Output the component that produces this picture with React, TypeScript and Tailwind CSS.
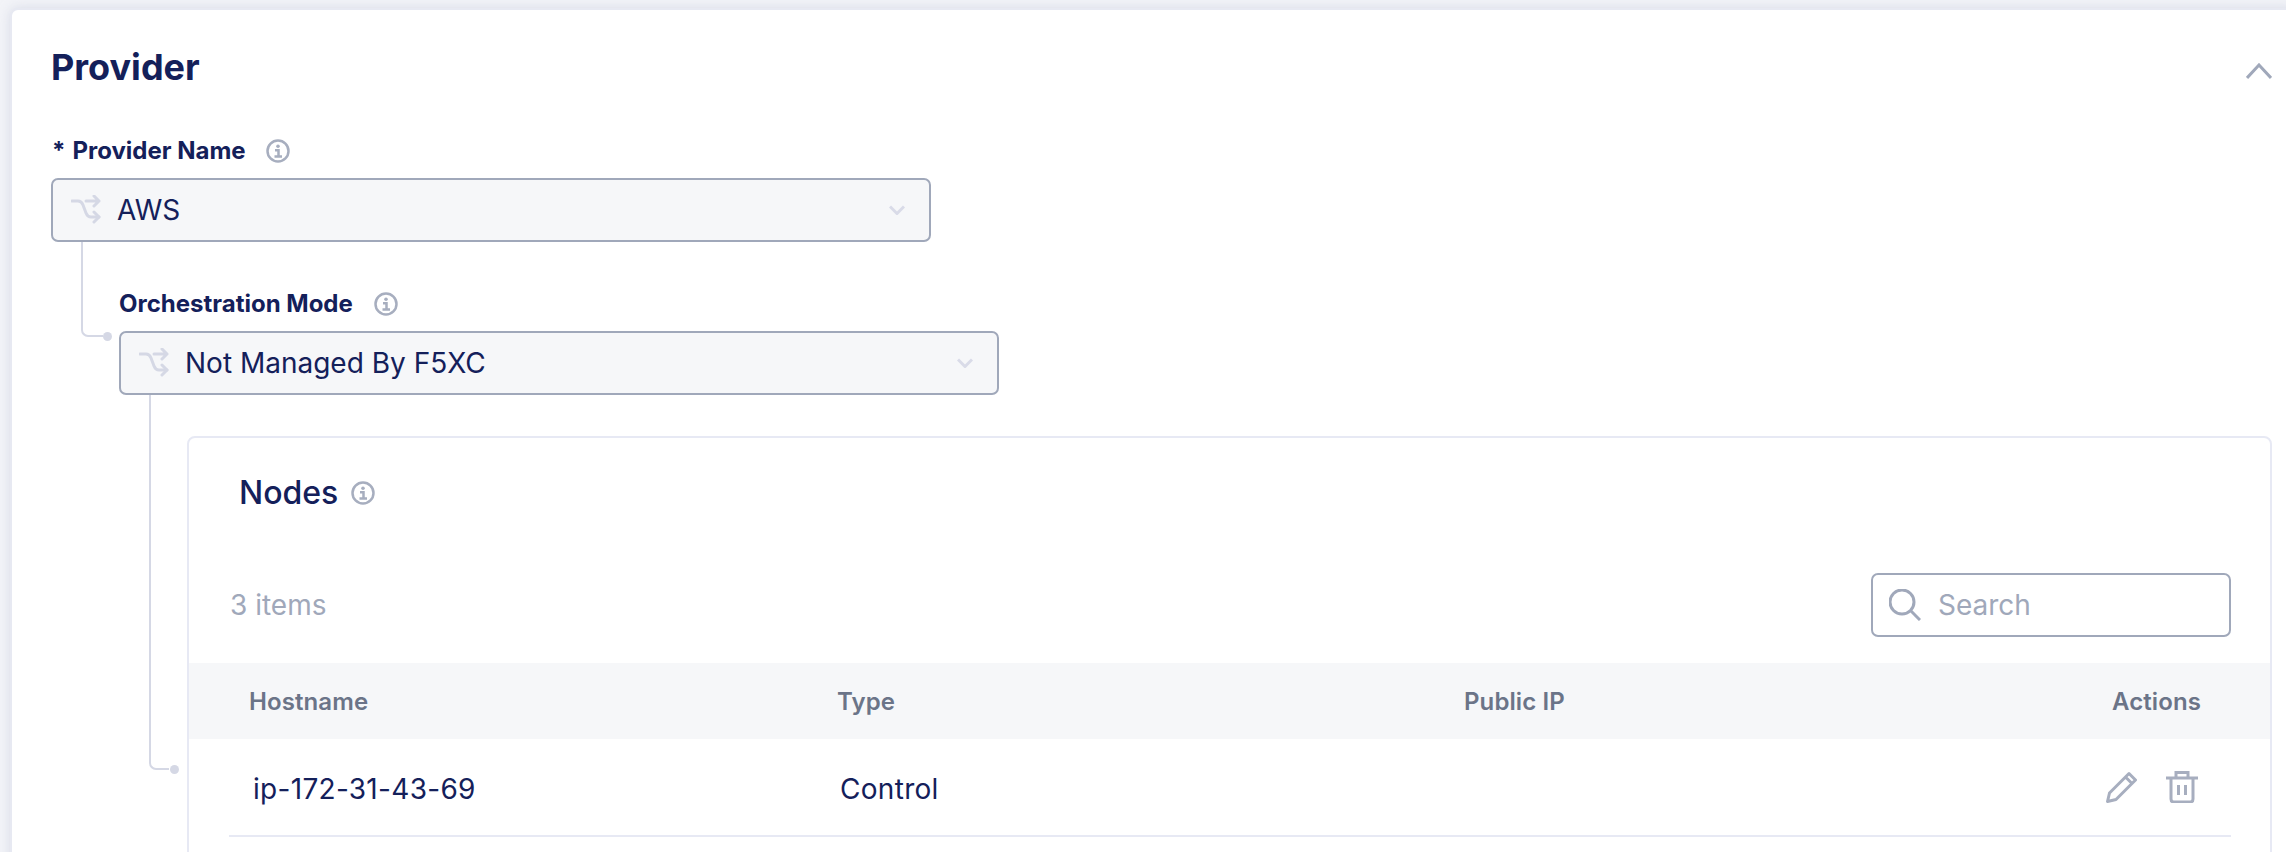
function InfoIcon() {
  return (
    <svg width="24" height="24" viewBox="0 0 24 24" fill="none" className="shrink-0">
      <circle cx="12" cy="12" r="10.5" stroke="#a7aebf" strokeWidth="2.500" />
      <circle cx="12" cy="7.200" r="1.800" fill="#a7aebf" />
      <path d="M9 11.200h3.500v6M8.500 17.500h7.500" stroke="#a7aebf" strokeWidth="2.500" />
    </svg>
  );
}

function RouteIcon() {
  return (
    <svg width="30" height="30" viewBox="0 0 30 30" fill="none" className="shrink-0">
      <path
        d="M1 6h6c3 0 4 1.500 5 4l3 8c1 2.500 2 4 5 4h8"
        stroke="#d5d8e5"
        strokeWidth="3"
        strokeLinecap="round"
      />
      <path
        d="M15 6h13M23 1l5 5-5 5M23 17l5 5-5 5"
        stroke="#d5d8e5"
        strokeWidth="3"
        strokeLinecap="round"
        strokeLinejoin="round"
      />
    </svg>
  );
}

function ChevronDown() {
  return (
    <svg width="16" height="10" viewBox="0 0 16 10" fill="none">
      <path d="M1 1.500l7 7 7-7" stroke="#d9dbe8" strokeWidth="3" />
    </svg>
  );
}

function SelectBox({ value }: { value: string }) {
  return (
    <div className="flex h-[64px] w-[880px] items-center rounded-[7px] border-2 border-[#a0a8ba] bg-[#f6f7f9] pl-[18px] pr-[24px]">
      <RouteIcon />
      <span className="ml-[16px] flex-1 text-[28px] leading-none text-[#14205a]">{value}</span>
      <ChevronDown />
    </div>
  );
}

function PencilIcon() {
  return (
    <svg width="32" height="32" viewBox="0 0 32 32" fill="none">
      <path
        d="M1.500 30.500l2-8.500L23 2.500l6.500 6.500L10 28.500l-8.500 2zM19.500 6l6.500 6.500"
        stroke="#a7aebf"
        strokeWidth="3"
        strokeLinejoin="round"
      />
    </svg>
  );
}

function TrashIcon() {
  return (
    <svg width="32" height="32" viewBox="0 0 32 32" fill="none">
      <path
        d="M0 7h32M10 7V1.500h12V7M5 7v21c0 1.700 1 3 3 3h16c2 0 3-1.300 3-3V7M12.500 14v10M19.500 14v10"
        stroke="#a7aebf"
        strokeWidth="3"
      />
    </svg>
  );
}

export default function App() {
  return (
    <div className="h-[852px] w-[2286px] overflow-hidden bg-[#f3f4f8] pl-[10px] pt-[8px] font-['Inter',sans-serif]">
      <div className="h-[900px] w-[2290px] rounded-[8px] border-2 border-[#e7e9f2] bg-white pl-[39px] pr-[26px] pt-[37px] shadow-[0_0_12px_rgba(190,195,215,0.5)]">
        <div className="flex h-[40px] items-center justify-between">
          <h2 className="text-[36px] font-bold leading-[40px] text-[#14205a]">Provider</h2>
          <svg width="26" height="16" viewBox="0 0 26 16" fill="none" className="mt-[8px]">
            <path d="M1 15L13 2l12 13" stroke="#a0a8ba" strokeWidth="3" />
          </svg>
        </div>

        <div className="mt-[52px] flex h-[24px] items-center pl-[1px]">
          <span className="mr-[7px] text-[24px] font-bold leading-[24px] text-[#14205a]">*</span>
          <span className="text-[24px] font-bold leading-[24px] text-[#14205a]">Provider Name</span>
          <span className="ml-[20px]">
            <InfoIcon />
          </span>
        </div>
        <div className="mt-[15px]">
          <SelectBox value="AWS" />
        </div>

        <div className="relative pl-[68px] pt-[50px]">
          {/* tree connector from the provider select */}
          <div className="absolute left-[30px] top-0 h-[95px] w-[22px] rounded-bl-[7px] border-b-2 border-l-2 border-[#d5d8e5]" />
          <div className="absolute left-[52px] top-[90px] h-[9px] w-[9px] rounded-full bg-[#d5d8e5]" />

          <div className="flex h-[24px] items-center">
            <span className="text-[24px] font-bold leading-[24px] text-[#14205a]">Orchestration Mode</span>
            <span className="ml-[21px]">
              <InfoIcon />
            </span>
          </div>
          <div className="mt-[15px]">
            <SelectBox value="Not Managed By F5XC" />
          </div>

          <div className="relative pl-[68px] pt-[41px]">
            {/* tree connector from the orchestration select */}
            <div className="absolute left-[30px] top-0 h-[375px] w-[20px] rounded-bl-[7px] border-b-2 border-l-2 border-[#d5d8e5]" />
            <div className="absolute left-[51px] top-[370px] h-[9px] w-[9px] rounded-full bg-[#d5d8e5]" />

            <div className="h-[500px] rounded-[8px] border-2 border-[#e7e9f4] bg-white pt-[35px]">
              <div className="flex h-[40px] items-center pl-[50px]">
                <span className="text-[32px] font-medium leading-[40px] text-[#14205a]">Nodes</span>
                <span className="ml-[13px]">
                  <InfoIcon />
                </span>
              </div>

              <div className="mt-[60px] flex h-[64px] items-center justify-between pl-[41px] pr-[39px]">
                <span className="text-[28px] text-[#a0a8ba]">3 items</span>
                <div className="flex h-[64px] w-[360px] items-center rounded-[7px] border-2 border-[#a0a8ba] bg-white pl-[16px]">
                  <svg width="32" height="32" viewBox="0 0 32 32" fill="none" className="shrink-0">
                    <circle cx="13" cy="13" r="12" stroke="#a0a8ba" strokeWidth="3" />
                    <path d="M21.500 21.500L31 31" stroke="#a0a8ba" strokeWidth="3" />
                  </svg>
                  <input
                    placeholder="Search"
                    className="ml-[17px] w-[280px] bg-transparent text-[28px] outline-none placeholder:text-[#a0a8ba]"
                  />
                </div>
              </div>

              <div className="mt-[26px] grid h-[76px] grid-cols-[588px_627px_1fr_auto] items-center bg-[#f6f7f9] pl-[60px] pr-[69px] pt-[2px] text-[24px] font-semibold tracking-[0.1px] text-[#6b7488]">
                <span>Hostname</span>
                <span>Type</span>
                <span>Public IP</span>
                <span>Actions</span>
              </div>

              <div className="ml-[40px] mr-[39px] grid h-[98px] grid-cols-[587px_1fr_auto] items-center border-b-2 border-[#e7e9f4] pl-[24px] pr-[33px] text-[28px] tracking-[0.3px] text-[#14205a]">
                <span className="mt-[4px]">ip-172-31-43-69</span>
                <span className="mt-[4px]">Control</span>
                <div className="flex items-center gap-[28px]">
                  <PencilIcon />
                  <TrashIcon />
                </div>
              </div>
            </div>
          </div>
        </div>
      </div>
    </div>
  );
}
